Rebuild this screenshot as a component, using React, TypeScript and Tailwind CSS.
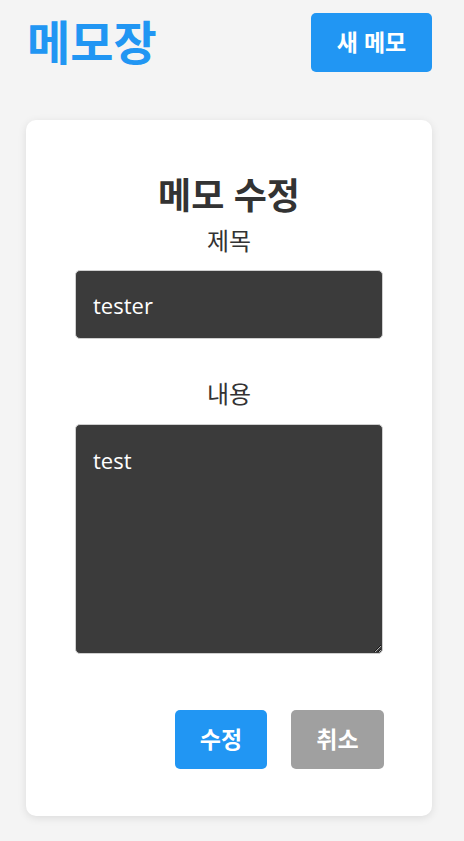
import React, { useState } from "react";

export default function App() {
  const [title, setTitle] = useState("tester");
  const [content, setContent] = useState("test");
  const font = { fontFamily: '"Open Sans", "Noto Sans CJK KR", sans-serif' };
  return (
    <div className="min-h-[841px] w-full bg-[#f4f4f4]" style={font}>
      <div className="flex items-center justify-between pl-[27px] pr-[32px] pt-[13px]">
        <h1 className="text-[47px] font-bold leading-[59px] text-[#2196f3]">메모장</h1>
        <button className="flex h-[59px] w-[121px] items-center justify-center rounded-[5px] bg-[#2196f3] text-[23px] font-bold text-white">
          새 메모
        </button>
      </div>
      <div className="ml-[26px] mr-[32px] mt-[48px] rounded-[10px] bg-white pb-[47px] pt-[56px] shadow-[0_2px_8px_rgba(0,0,0,0.1)]">
        <div className="mx-auto flex w-[308px] flex-col">
          <h2 className="text-center text-[36px] font-bold leading-[40px] text-[#333]">메모 수정</h2>
          <label className="mt-[11px] text-center text-[24px] leading-[28px] text-[#333]">제목</label>
          <input
            value={title}
            onChange={(e) => setTitle(e.target.value)}
            className="mt-[15px] h-[69px] w-full rounded-[5px] border border-[#cfcfcf] bg-[#3b3b3b] px-[17px] text-[22px] text-white outline-none"
          />
          <label className="mt-[41px] text-center text-[24px] leading-[28px] text-[#333]">내용</label>
          <textarea
            value={content}
            onChange={(e) => setContent(e.target.value)}
            className="mt-[16px] h-[230px] w-full rounded-[5px] border border-[#cfcfcf] bg-[#3b3b3b] px-[17px] pt-[21px] text-[22px] leading-[28px] text-white outline-none"
          />
          <div className="mt-[56px] flex justify-end gap-[24px]">
            <button className="flex h-[59px] w-[92px] items-center justify-center rounded-[5px] bg-[#2196f3] text-[23px] font-bold text-white">
              수정
            </button>
            <button className="mr-[-1px] flex h-[59px] w-[93px] items-center justify-center rounded-[5px] bg-[#a0a0a0] text-[23px] font-bold text-white">
              취소
            </button>
          </div>
        </div>
      </div>
    </div>
  );
}
